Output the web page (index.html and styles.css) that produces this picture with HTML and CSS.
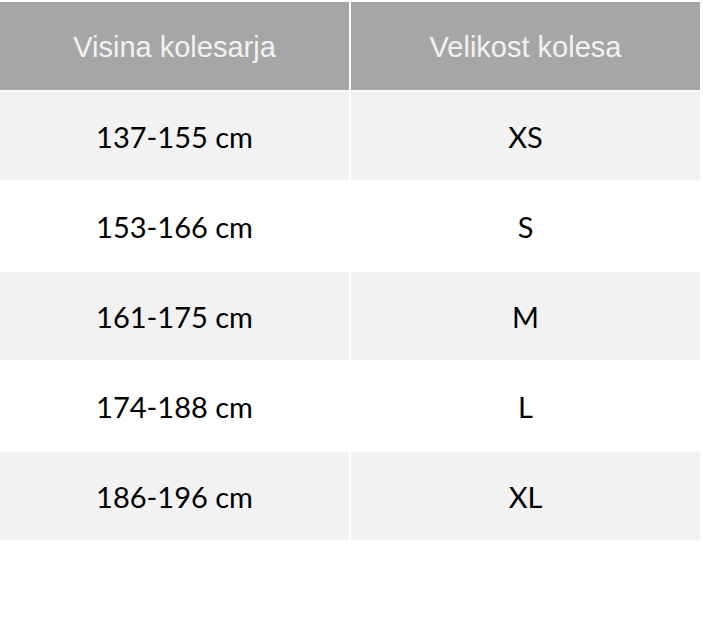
FILE: index.html
```html
<!DOCTYPE html>
<html lang="sl">
<head>
<meta charset="utf-8">
<title>Velikost kolesa</title>
<link rel="stylesheet" href="styles.css">
</head>
<body>
<div class="size-table">
  <div class="cell head">Visina kolesarja</div>
  <div class="cell head">Velikost kolesa</div>

  <div class="cell shade">137-155 cm</div>
  <div class="cell shade">XS</div>

  <div class="cell">153-166 cm</div>
  <div class="cell">S</div>

  <div class="cell shade">161-175 cm</div>
  <div class="cell shade">M</div>

  <div class="cell">174-188 cm</div>
  <div class="cell">L</div>

  <div class="cell shade">186-196 cm</div>
  <div class="cell shade">XL</div>
</div>
</body>
</html>
```

FILE: styles.css
```css
html, body {
  margin: 0;
  padding: 0;
  background: #ffffff;
}

.size-table {
  display: grid;
  grid-template-columns: 349px 349px;
  grid-auto-rows: 88px;
  gap: 2px;
  padding-top: 2px;
}

.cell {
  display: flex;
  align-items: center;
  justify-content: center;
  font-family: "Lato", "Noto Sans", sans-serif;
  font-size: 29px;
  color: #000000;
  background: #ffffff;
}

.cell.shade {
  background: #f2f2f2;
}

.cell.head {
  background: #a6a6a6;
  color: #f2f2f2;
  font-family: "Liberation Sans", Arial, sans-serif;
  font-size: 29px;
  padding-top: 3px;
}
```
